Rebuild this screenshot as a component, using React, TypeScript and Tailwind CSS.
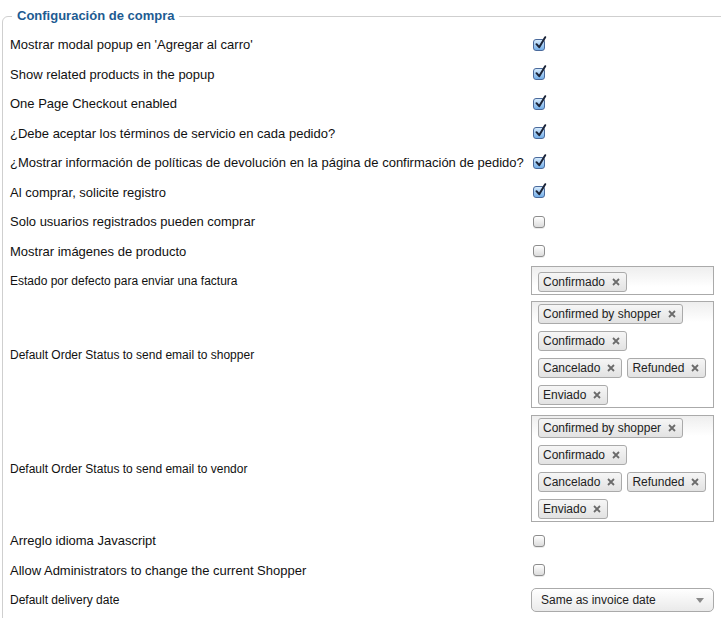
import React from "react";

type Row =
  | { kind: "check"; label: string; checked: boolean; h?: string }
  | { kind: "chips"; label: string; chips: string[][]; pt: string; rowPad: string }
  | { kind: "select"; label: string; value: string };

const rows: Row[] = [
  { kind: "check", label: "Mostrar modal popup en 'Agregar al carro'", checked: true },
  { kind: "check", label: "Show related products in the popup", checked: true },
  { kind: "check", label: "One Page Checkout enabled", checked: true },
  { kind: "check", label: "¿Debe aceptar los términos de servicio en cada pedido?", checked: true },
  {
    kind: "check",
    label: "¿Mostrar información de políticas de devolución en la página de confirmación de pedido?",
    checked: true,
  },
  { kind: "check", label: "Al comprar, solicite registro", checked: true },
  { kind: "check", label: "Solo usuarios registrados pueden comprar", checked: false },
  { kind: "check", label: "Mostrar imágenes de producto", checked: false },
  {
    kind: "chips",
    label: "Estado por defecto para enviar una factura",
    chips: [["Confirmado"]],
    pt: "pt-[5px]",
    rowPad: "pt-0 pb-[3px]",
  },
  {
    kind: "chips",
    label: "Default Order Status to send email to shopper",
    chips: [["Confirmed by shopper"], ["Confirmado"], ["Cancelado", "Refunded"], ["Enviado"]],
    pt: "pt-[2px]",
    rowPad: "pt-[3px] pb-[3px]",
  },
  {
    kind: "chips",
    label: "Default Order Status to send email to vendor",
    chips: [["Confirmed by shopper"], ["Confirmado"], ["Cancelado", "Refunded"], ["Enviado"]],
    pt: "pt-[2px]",
    rowPad: "pt-[4px] pb-[4px]",
  },
  { kind: "check", label: "Arreglo idioma Javascript", checked: false },
  { kind: "check", label: "Allow Administrators to change the current Shopper", checked: false },
  { kind: "select", label: "Default delivery date", value: "Same as invoice date" },
];

function Checkbox({ checked }: { checked: boolean }) {
  if (!checked) {
    return (
      <span className="block w-[12px] h-[12px] ml-[2px] rounded-[3px] border border-[#8d8d8d] bg-gradient-to-b from-white to-[#dcdcdc] shadow-[0_1px_0_rgba(0,0,0,0.08)]" />
    );
  }
  return (
    <span className="relative block w-[12px] h-[12px] ml-[2px] rounded-[3px] border border-[#4a6a9c] bg-gradient-to-b from-[#d6ebfd] to-[#73aee8]">
      <svg
        className="absolute left-[1px] top-[-4px]"
        width="12"
        height="14"
        viewBox="0 0 12 14"
      >
        <path d="M1.5 8.2 L4.2 11.2 L10.2 1.2" fill="none" stroke="#1b2438" strokeWidth="2" strokeLinecap="round" strokeLinejoin="round" />
      </svg>
    </span>
  );
}

function Chip({ text }: { text: string }) {
  return (
    <span className="flex items-center h-[20px] pl-[4px] pr-[6px] gap-[7px] rounded-[3px] border border-[#aaaaaa] bg-gradient-to-b from-[#f6f6f6] to-[#e2e2e2] text-[12px] text-[#222]">
      {text}
      <svg width="8" height="8" viewBox="0 0 8 8">
        <path d="M1 1 L7 7 M7 1 L1 7" stroke="#6b6b6b" strokeWidth="1.8" />
      </svg>
    </span>
  );
}

export default function App() {
  return (
    <div className="w-[721px] h-[618px] overflow-hidden bg-white font-['Liberation_Sans',Arial,sans-serif] text-[#111]">
      <fieldset className="mt-[8px] ml-[2px] w-[740px] border border-[#cfcfcf] rounded-[6px] pb-4">
        <legend className="ml-[9px] px-[5px] text-[13px] leading-[16px] font-bold text-[#1d5b92]">
          Configuración de compra
        </legend>
        <div className="pt-[6px] pl-[7px]">
          {rows.map((row, i) => {
            if (row.kind === "check") {
              return (
                <div key={i} className="flex items-center h-[29.5px]">
                  <div className="w-[521px] text-[13px]">{row.label}</div>
                  <Checkbox checked={row.checked} />
                </div>
              );
            }
            if (row.kind === "chips") {
              return (
                <div key={i} className={`flex items-center ${row.rowPad}`}>
                  <div className="w-[521px] text-[12px]">{row.label}</div>
                  <div
                    className={`w-[183px] border border-[#aaaaaa] bg-gradient-to-b from-[#eeeeee] to-white bg-[length:100%_20px] bg-no-repeat pl-[6px] pb-[2px] ${row.pt} flex flex-col gap-[7px]`}
                  >
                    {row.chips.map((line, j) => (
                      <div key={j} className="flex gap-[5px]">
                        {line.map((c) => (
                          <Chip key={c} text={c} />
                        ))}
                      </div>
                    ))}
                  </div>
                </div>
              );
            }
            return (
              <div key={i} className="flex items-center h-[30px]">
                <div className="w-[521px] text-[12px]">{row.label}</div>
                <div className="flex items-center justify-between w-[183px] h-[24px] pl-[9px] pr-[9px] rounded-[5px] border border-[#aaaaaa] bg-gradient-to-b from-white to-[#eaeaea] text-[12px] text-[#222]">
                  <span>{row.value}</span>
                  <svg width="8" height="5" viewBox="0 0 8 5">
                    <path d="M0 0 H8 L4 5 Z" fill="#8a8a8a" />
                  </svg>
                </div>
              </div>
            );
          })}
        </div>
      </fieldset>
    </div>
  );
}
